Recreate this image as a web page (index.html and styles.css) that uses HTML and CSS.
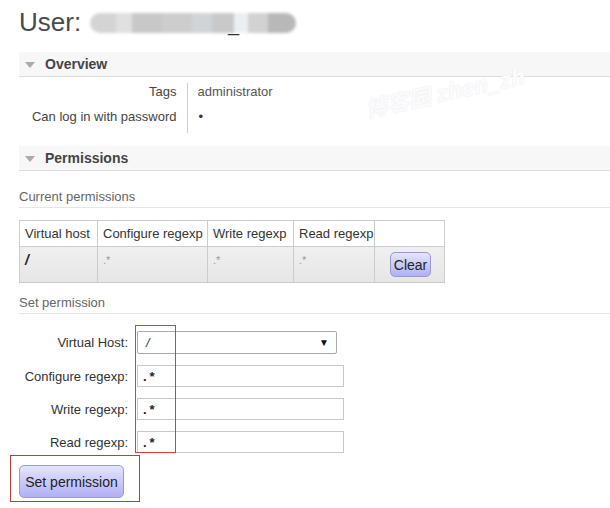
FILE: index.html
```html
<!DOCTYPE html>
<html>
<head>
<meta charset="utf-8">
<link rel="stylesheet" href="styles.css">
</head>
<body>
<div class="page">
  <h1 class="title">User: <span class="blurname"><span class="b b1"></span><span class="b b2"></span><span class="b b3"></span><span class="b b4"></span><span class="b b5"></span><span class="b b6"></span><span class="b b7"></span><span class="b b8"></span><span class="b b9"></span></span><span class="under">_</span></h1>

  <div class="section-head"><span class="tri"></span>Overview</div>
  <table class="facts">
    <tr><th>Tags</th><td>administrator</td></tr>
    <tr><th>Can log in with password</th><td class="dot">&#8226;</td></tr>
  </table>

  <div class="section-head perm-head"><span class="tri"></span>Permissions</div>

  <h3 class="sub">Current permissions</h3>
  <table class="list">
    <colgroup><col class="c1"><col class="c2"><col class="c3"><col class="c4"><col class="c5"></colgroup>
    <thead>
      <tr><th>Virtual host</th><th>Configure regexp</th><th>Write regexp</th><th>Read regexp</th><th></th></tr>
    </thead>
    <tbody>
      <tr><td class="vh">/</td><td class="rx">.*</td><td class="rx">.*</td><td class="rx">.*</td><td class="btn-cell"><button class="btn small">Clear</button></td></tr>
    </tbody>
  </table>

  <h3 class="sub set">Set permission</h3>
  <div class="form">
    <label>Virtual Host:</label>
    <div class="select"><span>/</span><span class="arrow">&#9660;</span></div>
    <label>Configure regexp:</label>
    <input class="field" type="text" value=".*">
    <label>Write regexp:</label>
    <input class="field" type="text" value=".*">
    <label>Read regexp:</label>
    <input class="field" type="text" value=".*">
  </div>
  <button class="btn big">Set permission</button>

  <div class="mark mark-inputs"></div>
  <div class="mark mark-button"></div>
  <div class="watermark">博客园 zhen_zh</div>
</div>
</body>
</html>
```
FILE: styles.css
```css
html, body {
  margin: 0;
  padding: 0;
  background: #fff;
}
.page {
  position: relative;
  width: 610px;
  height: 508px;
  overflow: hidden;
  padding-left: 19px;
  box-sizing: border-box;
  font-family: "Liberation Sans", Arial, sans-serif;
  font-size: 13px;
  color: #444;
}
.title {
  margin: 0;
  padding-top: 7px;
  height: 52px;
  box-sizing: border-box;
  font-size: 26px;
  font-weight: normal;
  color: #4a4a4a;
  display: flex;
  align-items: flex-start;
  line-height: 30px;
}
.blurname {
  display: inline-flex;
  margin-left: 9px;
  margin-top: 6px;
  height: 20px;
  filter: blur(1.5px);
}
.b { display: inline-block; height: 20px; }
.b1 { width: 26px; background: #d4d4d4; border-radius: 10px 0 0 10px; }
.b2 { width: 16px; background: #e0e0e0; }
.b3 { width: 30px; background: #c8c8c8; }
.b4 { width: 30px; background: #cdcdcd; }
.b5 { width: 20px; background: #d0d4d6; }
.b6 { width: 22px; background: #c9c9c9; }
.b7 { width: 14px; background: #eceff2; }
.b8 { width: 20px; background: #d2d2d2; }
.b9 { width: 28px; background: #b8b8b8; border-radius: 0 10px 10px 0; }
.under {
  position: absolute;
  left: 228px;
  top: 14px;
  font-size: 20px;
  line-height: 20px;
  color: #333;
}
.section-head {
  height: 25px;
  background: #f7f7f7;
  border-bottom: 1px solid #dcdcdc;
  box-sizing: border-box;
  display: flex;
  align-items: center;
  font-weight: bold;
  font-size: 14px;
  color: #444;
}
.tri {
  width: 0;
  height: 0;
  border-left: 5px solid transparent;
  border-right: 5px solid transparent;
  border-top: 6px solid #aaa;
  margin-left: 6px;
  margin-right: 10px;
  margin-top: 1px;
}
.facts {
  border-collapse: collapse;
  margin-top: 6px;
}
.facts th, .facts td {
  height: 25px;
  padding: 1px 0 0 0;
  vertical-align: top;
  line-height: 16px;
  box-sizing: border-box;
}
.facts th {
  width: 168px;
  padding-right: 10px;
  text-align: right;
  font-weight: normal;
  border-right: 1px solid #ccc;
  color: #444;
}
.facts td {
  padding-left: 10px;
  color: #555;
}
.facts td.dot {
  color: #333;
  padding-left: 11px;
}
.perm-head {
  margin-top: 13px;
}
.sub {
  margin: 18px 0 0 0;
  font-size: 13px;
  font-weight: normal;
  color: #666;
  padding-bottom: 2px;
  border-bottom: 1px solid #e6e6e6;
  line-height: 16px;
}
.list {
  border-collapse: collapse;
  margin-top: 12px;
  table-layout: fixed;
  width: 425px;
}
.c1 { width: 78px; }
.c2 { width: 110px; }
.c3 { width: 86px; }
.c4 { width: 81px; }
.c5 { width: 70px; }
.list th, .list td {
  border: 1px solid #ccc;
  padding: 0 5px;
  text-align: left;
  white-space: nowrap;
  overflow: hidden;
}
.list th {
  font-weight: normal;
  height: 25px;
  line-height: 16px;
  color: #333;
  font-size: 13px;
}
.list tbody tr {
  background: linear-gradient(#f0f0f0, #e6e6e6);
}
.list td {
  height: 30px;
  vertical-align: top;
  padding-top: 5px;
  line-height: 16px;
}
.vh {
  font-weight: bold;
  font-style: italic;
  font-size: 14px;
  color: #222;
}
.rx {
  color: #999;
  font-size: 11px;
}
.list td.btn-cell {
  text-align: center;
  padding-top: 5px;
}
.btn {
  font-family: "Liberation Sans", Arial, sans-serif;
  color: #222;
  background: linear-gradient(#e4e4ff, #b0b0f4);
  border: 1px solid #9999cc;
  border-radius: 5px;
  cursor: pointer;
}
.btn.small {
  font-size: 14px;
  height: 25px;
  width: 41px;
  padding: 0;
  margin-left: 2px;
}
.set {
  margin-top: 12px;
}
.form {
  display: grid;
  grid-template-columns: 109px auto;
  column-gap: 9px;
  row-gap: 11px;
  margin-top: 17px;
  align-items: center;
  justify-items: start;
}
.form label {
  justify-self: end;
  color: #333;
  font-size: 13px;
}
.select {
  width: 200px;
  height: 23px;
  box-sizing: border-box;
  border: 1px solid #a9a9a9;
  border-radius: 2px;
  display: flex;
  align-items: center;
  justify-content: space-between;
  padding: 0 7px 0 8px;
  color: #333;
  font-style: italic;
}
.arrow {
  font-size: 10px;
  color: #111;
  font-style: normal;
}
.field {
  width: 207px;
  height: 22px;
  box-sizing: border-box;
  border: 1px solid #c8c8c8;
  padding: 0 0 0 5px;
  margin: 0;
  font-family: "Liberation Sans", Arial, sans-serif;
  font-size: 13px;
  letter-spacing: 3px;
  font-weight: bold;
  color: #222;
}
.btn.big {
  display: block;
  margin-top: 12px;
  height: 33px;
  width: 105px;
  padding: 0;
  font-size: 14px;
}
.mark {
  position: absolute;
  border: 1px solid #e53935;
  box-sizing: border-box;
}
.mark-inputs {
  left: 135px;
  top: 325px;
  width: 41px;
  height: 128px;
}
.mark-button {
  left: 10px;
  top: 455px;
  width: 130px;
  height: 47px;
  border-color: #c0393b;
}
.watermark {
  position: absolute;
  left: 362px;
  top: 92px;
  transform: rotate(-12deg);
  transform-origin: left top;
  font-family: "Noto Sans CJK SC", "DejaVu Sans", sans-serif;
  font-size: 22px;
  font-weight: bold;
  font-style: italic;
  color: #fbfbfd;
  text-shadow: 0 0 1px #e8ebf3, 0 0 2px #eceef4;
  white-space: nowrap;
}
```
